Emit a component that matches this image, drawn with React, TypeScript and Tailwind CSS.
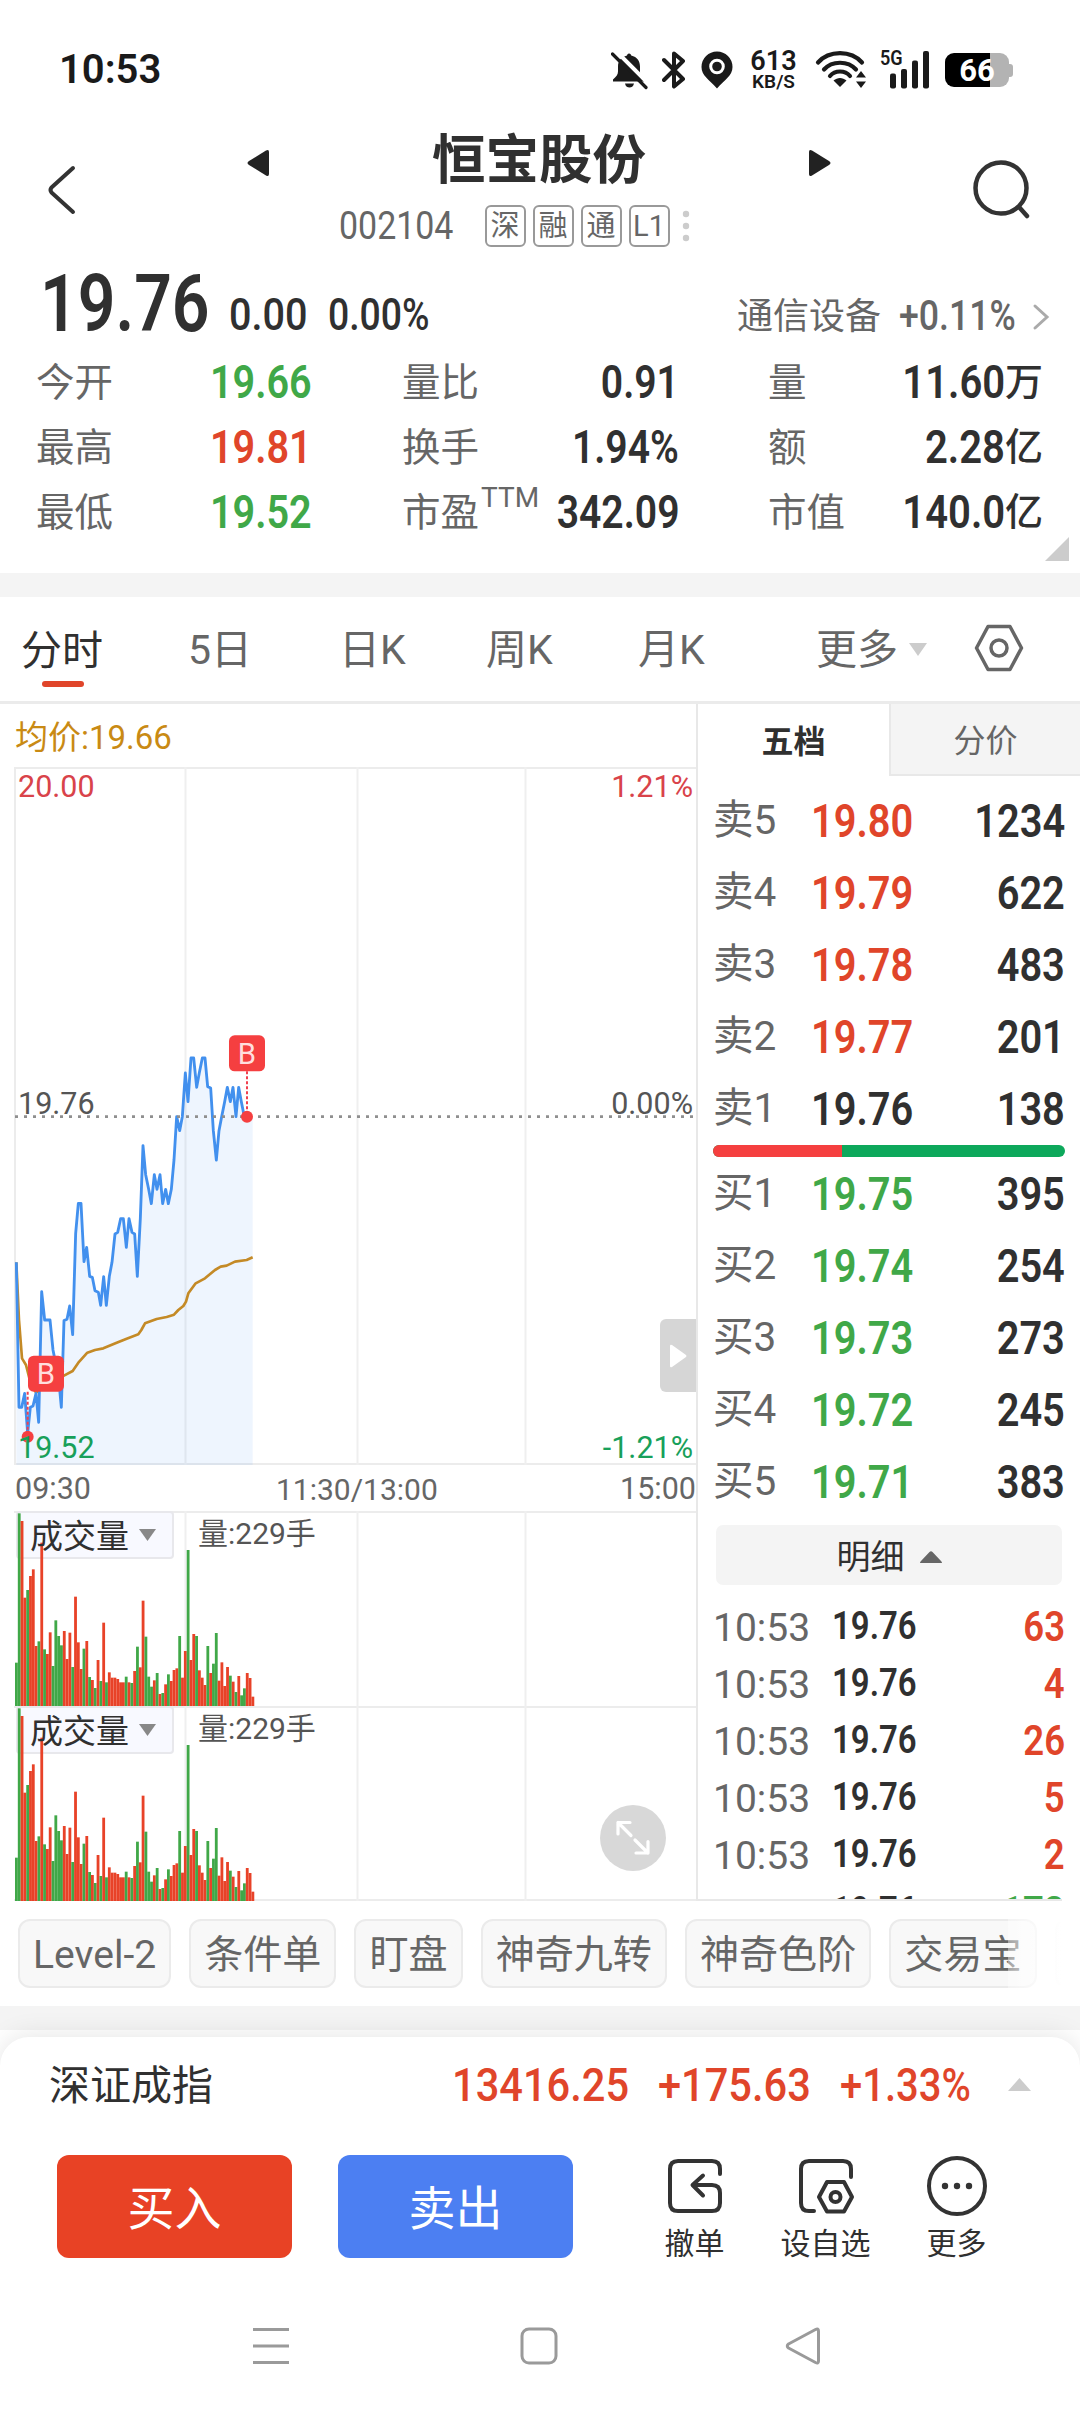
import React from "react";
import clsx from "clsx";

type Side = { label: string; price: string; size: string; tone: string };

const RED = "text-[#e0452a]";
const GREEN = "text-[#40a848]";
const DARK = "text-[#303030]";

const sells: Side[] = [
  { label: "卖5", price: "19.80", size: "1234", tone: RED },
  { label: "卖4", price: "19.79", size: "622", tone: RED },
  { label: "卖3", price: "19.78", size: "483", tone: RED },
  { label: "卖2", price: "19.77", size: "201", tone: RED },
  { label: "卖1", price: "19.76", size: "138", tone: DARK },
];

const buys: Side[] = [
  { label: "买1", price: "19.75", size: "395", tone: GREEN },
  { label: "买2", price: "19.74", size: "254", tone: GREEN },
  { label: "买3", price: "19.73", size: "273", tone: GREEN },
  { label: "买4", price: "19.72", size: "245", tone: GREEN },
  { label: "买5", price: "19.71", size: "383", tone: GREEN },
];

const ticks = [
  { size: "63", tone: RED },
  { size: "4", tone: RED },
  { size: "26", tone: RED },
  { size: "5", tone: RED },
  { size: "2", tone: RED },
  { size: "172", tone: GREEN },
];

const chips = ["Level-2", "条件单", "盯盘", "神奇九转", "神奇色阶", "交易宝"];

const priceLine =
  "49,787 57,1222 65,1222 74,1180 83,1300 91,1222 99,1218 108,1180 116,1267 125,875 134,960 150,960 159,1050 167,1090 176,1135 184,1222 192,962 201,958 209,918 218,1004 227,700 235,610 243,610 252,785 260,742 269,829 277,832 285,872 295,877 302,916 311,830 319,916 328,829 336,787 345,702 353,697 362,656 370,656 379,742 387,656 396,697 404,702 412,829 421,655 429,437 437,524 446,568 454,611 463,524 471,568 480,524 488,611 497,568 505,611 514,568 522,480 530,350 539,392 547,350 556,219 564,305 573,174 581,174 590,262 598,218 607,174 615,174 623,260 632,264 640,392 649,480 657,392 665,350 674,305 682,262 691,305 699,262 708,350 716,262 724,305 733,350 741,350";

const avgLine =
  "49,787 57,960 66,1075 78,1095 92,1150 108,1178 150,1150 192,1127 218,1113 235,1088 262,1058 285,1050 310,1045 350,1028 380,1016 415,1003 424,990 435,970 470,957 500,951 522,944 535,930 550,918 558,905 565,880 587,850 615,835 645,810 662,800 680,797 705,785 740,780 758,772";

/* Bar tops of the volume histogram, one per minute; the prefix gives the bar's direction. */
const volumes =
  "g668 g220 r243 r473 g450 r408 r388 r618 g604 r308 g628 r642 r577 g678 g541 g588 g616 r573 r657 r578 g681 r470 r607 r687 g626 r603 g711 r720 g744 r660 g723 r548 g727 r697 r713 r713 r717 r727 r727 g710 r727 g729 r693 g620 r682 r482 g590 g710 g740 r721 g699 r762 g759 r733 g703 r723 r690 r685 g588 r713 r633 g330 r660 r582 g588 r691 r713 r735 g618 r699 g671 g579 r722 r667 r738 r681 g707 r725 g756 r708 g766 g745 r699 r714 r770".split(
    " ",
  );

function Num({ children, className }: { children: React.ReactNode; className?: string }) {
  return <span className={clsx("inline-block whitespace-nowrap leading-none", className)}>{children}</span>;
}

function StatusBar() {
  return (
    <div className="flex h-[93px] items-end justify-between pl-[59px] pr-[67px] text-[#1a1a1a]">
      <span className="mb-[3px] text-[40px] font-semibold leading-[40px]">10:53</span>
      <div className="flex h-[42px] items-start">
        <svg width="38" height="40" viewBox="0 0 38 40" className="mr-[13px]">
          <path d="M18 2.500c1.500 0 2 1 2.200 2 6 1.500 8.800 5.500 8.800 11v6c0 2.500 1.500 4.500 4 7v2H2v-2c3-2.500 5-5 5-8v-5c0-6 3.500-9.500 9-11 .2-1 .8-2 2-2z" fill="currentColor" />
          <path d="M14 32.500h9c-.8 3-2.500 4-4.500 4s-3.800-1-4.500-4z" fill="currentColor" />
          <path d="M3 -2l36 36" stroke="#fff" strokeWidth="4" />
          <path d="M1.500 3l33.500 33.500" stroke="currentColor" strokeWidth="3.200" strokeLinecap="round" />
        </svg>
        <svg width="24" height="38" viewBox="0 0 24 38" className="mr-[15px]">
          <path d="M2 9l19 19-9 7.500V2.500L21 10 2 29" fill="none" stroke="currentColor" strokeWidth="4" strokeLinejoin="round" strokeLinecap="round" />
        </svg>
        <svg width="32" height="38" viewBox="0 0 32 38" className="mr-[17px]">
          <path d="M16 .5a15.500 15.500 0 0 0-15.500 15.500C.5 25 8 28 16 37.500 24 28 31.500 25 31.500 16A15.500 15.500 0 0 0 16 .5z" fill="currentColor" />
          <circle cx="16" cy="15.500" r="6.300" fill="none" stroke="#fff" strokeWidth="3" />
        </svg>
        <div className="mr-[18px] flex w-[47px] flex-col items-center font-semibold">
          <span className="text-[27px] leading-[21px]">613</span>
          <span className="whitespace-nowrap text-[19px] leading-[19px]">KB/S</span>
        </div>
        <svg width="52" height="38" viewBox="0 0 52 38" className="mr-[13px]">
          <g fill="none" stroke="currentColor" strokeWidth="4.200" strokeLinecap="round">
            <path d="M3 11.500C14-1 36-1 47 11.500" />
            <path d="M9 18.500c8-9 24-9 32 0" />
            <path d="M15 25c5-6 15-6 20 0" />
          </g>
          <path d="M18.500 29.500c4-3.500 9-3.500 13 0L25 36z" fill="currentColor" />
          <path d="M41 26.500h10L46 20zM41 30.500h10L46 37z" fill="currentColor" />
        </svg>
        <div className="relative mr-[16px] h-[38px] w-[49px]">
          <span className="absolute left-0 top-[-3px] origin-left scale-x-[.86] text-[21px] font-semibold leading-[21px]">5G</span>
          <svg width="39" height="38" viewBox="0 0 39 38" className="absolute right-0 top-0" fill="currentColor">
            <rect x="0" y="22.500" width="6" height="15" rx="2" />
            <rect x="11" y="18" width="6" height="19.500" rx="2" />
            <rect x="22" y="9.500" width="6" height="28" rx="2" />
            <rect x="33" y="0" width="6" height="37.500" rx="2" />
          </svg>
        </div>
        <div className="relative mt-[2px] flex h-[34px] w-[68px] items-center">
          <div className="flex h-full w-[64px] items-center justify-center overflow-hidden rounded-[9px] bg-[linear-gradient(90deg,#000_70%,#b3b3b3_70%)] text-[31px] font-bold leading-none text-white">
            66
          </div>
          <div className="h-[13px] w-[4px] rounded-r-[3px] bg-[#b3b3b3]" />
        </div>
      </div>
    </div>
  );
}

function Header() {
  return (
    <div className="flex h-[167px] justify-between pl-[46px] pr-[46px]">
      <svg width="30" height="50" viewBox="0 0 30 50" className="mt-[72px]" fill="none" stroke="#333" strokeWidth="4" strokeLinecap="round" strokeLinejoin="round">
        <path d="M27 3L5.500 22.500Q3.500 25 5.500 27.500L27 47" />
      </svg>
      <div className="ml-[30px] flex w-[586px] flex-col items-center">
        <div className="mt-[40px] flex h-[56px] w-full items-center justify-between">
          <svg width="24" height="28" viewBox="0 0 24 28" className="mt-[3px]">
            <path d="M23 3v22q0 3-3 1.500L3 16q-3-2 0-4L20 1.500Q23 0 23 3z" fill="#222" />
          </svg>
          <span className="text-[53.500px] font-bold leading-none text-[#303030]">恒宝股份</span>
          <svg width="24" height="28" viewBox="0 0 24 28" className="mt-[3px]">
            <path d="M1 3v22q0 3 3 1.500L21 16q3-2 0-4L4 1.500Q1 0 1 3z" fill="#222" />
          </svg>
        </div>
        <div className="mr-[50px] mt-[15px] flex h-[44px] items-center text-[#666]">
          <span className="w-[146px] text-[39px] leading-none">
            <span className="inline-block origin-left scale-x-[.87]">002104</span>
          </span>
          <div className="flex gap-[7px]">
            {["深", "融", "通", "L1"].map((t) => (
              <span key={t} className="flex h-[42px] w-[41px] items-center justify-center rounded-[6px] border-2 border-[#999] text-[29px] leading-none">
                {t}
              </span>
            ))}
          </div>
          <svg width="8" height="32" viewBox="0 0 8 32" className="ml-[12px]" fill="#ccc">
            <circle cx="4" cy="4" r="3.200" />
            <circle cx="4" cy="16" r="3.200" />
            <circle cx="4" cy="28" r="3.200" />
          </svg>
        </div>
      </div>
      <svg width="62" height="62" viewBox="0 0 62 62" className="mt-[66px]" fill="none" stroke="#333" strokeWidth="4.500" strokeLinecap="round">
        <circle cx="29" cy="29" r="25.500" />
        <path d="M47 48l8 9" />
      </svg>
    </div>
  );
}

function Label({ children }: { children: React.ReactNode }) {
  return <span className="relative top-[2px] inline-block whitespace-nowrap text-[38.500px] leading-none text-[#666]">{children}</span>;
}

function Quote() {
  const rows = [
    ["今开", "19.66", GREEN, "量比", "0.91", "量", "11.60万"],
    ["最高", "19.81", RED, "换手", "1.94%", "额", "2.28亿"],
    ["最低", "19.52", GREEN, "市盈", "342.09", "市值", "140.0亿"],
  ];
  return (
    <div className="relative h-[313px] font-semibold">
      <div className="flex h-[89px] items-end pl-[40px] pr-[30px] text-[#303030]">
        <span className="mb-[5px] w-[189px]">
          <Num className="origin-left scale-x-[.825] text-[80px]">19.76</Num>
        </span>
        <span className="mb-[12px] w-[99px]">
          <Num className="origin-left scale-x-[.88] text-[45px] font-medium">0.00</Num>
        </span>
        <span className="mb-[12px]">
          <Num className="origin-left scale-x-[.83] text-[45px] font-medium">0.00%</Num>
        </span>
        <div className="ml-auto flex items-center font-normal text-[#666]">
          <span className="mb-[10px] text-[36px] leading-none">通信设备</span>
          <span className="mb-[12px] ml-[18px] w-[133px]">
            <Num className="origin-left scale-x-[.85] text-[42px] font-medium">+0.11%</Num>
          </span>
          <svg width="18" height="28" viewBox="0 0 18 28" className="mb-[11px]" fill="none" stroke="#aaa" strokeWidth="3" strokeLinecap="round">
            <path d="M3 3l12 11L3 25" />
          </svg>
        </div>
      </div>
      {rows.map(([a, av, tone, b, bv, c, cv]) => (
        <div key={a} className="flex h-[65px] items-center pl-[36px] pr-[37px]">
          <span className="w-[174px] font-normal">
            <Label>{a}</Label>
          </span>
          <span className={clsx("w-[192px]", tone)}>
            <Num className="origin-left scale-x-[.86] text-[46px]">{av}</Num>
          </span>
          <span className="relative w-[76px] font-normal">
            <Label>{b}</Label>
            {b === "市盈" && <span className="absolute left-[79px] top-[-8px] text-[28px] leading-none text-[#666]">TTM</span>}
          </span>
          <span className="flex w-[201px] justify-end text-[#303030]">
            <Num className="origin-right scale-x-[.85] text-[46px]">{bv}</Num>
          </span>
          <span className="ml-[89px] w-[76px] font-normal">
            <Label>{c}</Label>
          </span>
          <span className="flex flex-1 items-center justify-end text-[#303030]">
            <Num className="origin-right scale-x-[.87] text-[46px]">{cv.slice(0, -1)}</Num>
            <span className="text-[38px] font-medium leading-none">{cv.slice(-1)}</span>
          </span>
        </div>
      ))}
      <svg width="24" height="24" viewBox="0 0 24 24" className="absolute bottom-[12px] right-[11px]">
        <path d="M24 0v24H0z" fill="#ccc" />
      </svg>
    </div>
  );
}

function PeriodTabs() {
  return (
    <div className="flex h-[107px] items-center border-b-[3px] border-[#ebebeb] pt-[3px] text-[41px] leading-none text-[#666]">
      <div className="flex w-[167px] flex-col pl-[21px] pt-[17px] text-[#303030]">
        <span>分时</span>
        <span className="ml-[21px] mt-[9px] h-[6px] w-[42px] rounded-full bg-[#e0452a]" />
      </div>
      <span className="w-[172px] pl-[21px]">5日</span>
      <span className="w-[147px]">日K</span>
      <span className="w-[152px]">周K</span>
      <span className="w-[178px]">月K</span>
      <span>更多</span>
      <svg width="18" height="13" viewBox="0 0 18 13" className="-mt-[3px] ml-[11px]">
        <path d="M0 0h18L9 13z" fill="#ccc" />
      </svg>
      <svg width="50" height="48" viewBox="0 0 50 48" className="-mt-[5px] ml-[47px]" fill="none" stroke="#666" strokeWidth="3.500" strokeLinejoin="round">
        <path d="M14 2.500h22L47.500 24 36 45.500H14L2.500 24z" />
        <circle cx="25" cy="24" r="8" />
      </svg>
    </div>
  );
}

function Marker({ x, y, dotX, dotY }: { x: number; y: number; dotX: number; dotY: number }) {
  return (
    <g>
      <path d={`M${dotX} ${y + 108}V${dotY}`} stroke="#f04050" strokeWidth="6" strokeDasharray="9 6" />
      <circle cx={dotX} cy={dotY} r="18" fill="#f53f40" />
      <rect x={x} y={y} width="108" height="108" rx="17" fill="#f53f40" />
      <text x={x + 54} y={y + 86} textAnchor="middle" fontSize="88" fill="#ffdede">
        B
      </text>
    </g>
  );
}

function PriceChart() {
  return (
    <div className="relative ml-[14px] h-[698px] border-b-2 border-l-2 border-t-2 border-[#ececec] text-[30.500px] leading-none">
      <svg width="682" height="698" viewBox="0 0 682 698" className="absolute -left-[2px] -top-[2px]">
        <path d="M171.500 0v698M343.500 0v698M511.500 0v698" stroke="#efefef" strokeWidth="2" />
        <g transform="translate(-14 233) scale(0.33333)">
          <polygon points={`${priceLine} 758,350 758,1395 49,1395`} fill="#4090f0" fillOpacity="0.09" />
          <polyline points={avgLine} fill="none" stroke="#c48a26" strokeWidth="8" strokeLinejoin="round" />
          <polyline points={priceLine} fill="none" stroke="#4290ee" strokeWidth="8.500" strokeLinejoin="round" />
          <path d="M45 350H2088" stroke="#8f8f8f" strokeWidth="8" strokeDasharray="9 18" />
          <Marker x={687} y={106} dotX={741} dotY={350} />
          <Marker x={84} y={1067} dotX={83} dotY={1310} />
        </g>
      </svg>
      <span className="absolute left-[2px] top-[3px] text-[#d9434a]">20.00</span>
      <span className="absolute right-[3px] top-[3px] text-[#d9434a]">1.21%</span>
      <span className="absolute left-[2px] top-[320px] text-[#555]">19.76</span>
      <span className="absolute right-[3px] top-[320px] text-[#555]">0.00%</span>
      <span className="absolute bottom-0 left-[2px] text-[#18a05a]">19.52</span>
      <span className="absolute bottom-0 right-[3px] text-[#18a05a]">-1.21%</span>
      <div className="absolute right-0 top-[550px] flex h-[73px] w-[36px] items-center justify-center rounded-l-[6px] bg-[#d6d6d6]">
        <svg width="18" height="24" viewBox="0 0 18 24">
          <path d="M1 2v20q0 2 2 1L17 13q1-1 0-2L3 1Q1 0 1 2z" fill="#fff" />
        </svg>
      </div>
    </div>
  );
}

function VolumeChart({ last }: { last?: boolean }) {
  return (
    <div className={clsx("relative ml-[14px] h-[195px] border-t-2 border-[#ececec]", last && "border-b-2")}>
      <div className="absolute -top-[2px] left-[2px] flex h-[48px] w-[158px] rounded-[4px] border-2 border-[#e8e8ec] bg-[#f8f9ff]" />
      <svg width="682" height="195" viewBox="0 0 682 195" className="absolute left-0 -top-[2px]">
        <path d="M171.500 0v195M343.500 0v195M511.500 0v195" stroke="#efefef" strokeWidth="2" />
        {volumes.map((v, i) => {
          const top = Number(v.slice(1)) / 3 - 71;
          return <rect key={i} x={1 + i * 2.815} y={top} width="2.815" height={195 - top} fill={v[0] === "g" ? "#40a848" : "#e84228"} />;
        })}
      </svg>
      <div className="relative flex h-[44px] items-center pl-[16px] pt-[2px] text-[33px] leading-none text-[#303030]">
        成交量
        <svg width="17" height="12" viewBox="0 0 17 12" className="-mt-[2px] ml-[10px]">
          <path d="M0 0h17L8.500 12z" fill="#888" />
        </svg>
        <span className="-mt-[5px] ml-[42px] text-[30px] text-[#555]">量:229手</span>
      </div>
    </div>
  );
}

function BookRow({ row }: { row: Side }) {
  return (
    <div className="flex h-[72px] items-center pl-[15px] pr-[15px]">
      <span className="mt-[3px] w-[98px] text-[40.500px] leading-none text-[#666]">{row.label}</span>
      <span className={clsx("mt-[3px] font-semibold", row.tone)}>
        <Num className="origin-left scale-x-[.865] text-[46px]">{row.price}</Num>
      </span>
      <span className="mt-[3px] flex flex-1 justify-end font-semibold text-[#303030]">
        <Num className="origin-right scale-x-[.865] text-[46px]">{row.size}</Num>
      </span>
    </div>
  );
}

function OrderBook() {
  return (
    <div className="flex h-[1197px] w-[384px] flex-col border-l-2 border-[#e8e8e8]">
      <div className="flex h-[72px] text-[32px] leading-none">
        <div className="flex w-[191px] items-center justify-center pt-[3px] font-bold text-[#303030]">五档</div>
        <div className="flex flex-1 items-center justify-center border-2 border-r-0 border-t-0 border-[#e8e8e8] bg-[#f4f4f4] pt-[3px] text-[#666]">分价</div>
      </div>
      <div className="h-[7px]" />
      {sells.map((r) => (
        <BookRow key={r.label} row={r} />
      ))}
      <div className="ml-[15px] mr-[15px] mt-[2px] flex h-[12px] shrink-0 overflow-hidden rounded-full bg-[#0da85b]">
        <div className="w-[129px] bg-[#f53f3f]" />
      </div>
      <div className="-mt-px">
        {buys.map((r) => (
          <BookRow key={r.label} row={r} />
        ))}
      </div>
      <div className="ml-[18px] mt-[9px] flex h-[60px] w-[346px] shrink-0 items-center justify-center rounded-[7px] bg-[#f4f4f4] pt-[4px] text-[34px] leading-none text-[#303030]">
        明细
        <svg width="22" height="12" viewBox="0 0 22 12" className="ml-[15px]">
          <path d="M1 12Q-1 12 1 10L9.500 1Q11-.5 12.500 1L21 10Q23 12 21 12z" fill="#666" />
        </svg>
      </div>
      <div className="min-h-0 flex-1 overflow-hidden pt-[13px]">
        {ticks.map((t, i) => (
          <div key={i} className="flex h-[57px] items-center pl-[15px] pr-[15px]">
            <span className="mt-[4px] w-[119px] text-[39px] leading-none text-[#666]">{i < 5 ? "10:53" : ""}</span>
            <span className="font-semibold text-[#303030]">
              <Num className="origin-left scale-x-[.845] text-[39px]">19.76</Num>
            </span>
            <span className={clsx("flex flex-1 justify-end font-semibold", t.tone)}>
              <Num className="origin-right scale-x-[.85] text-[43px]">{t.size}</Num>
            </span>
          </div>
        ))}
      </div>
      <div className="mr-[18px] h-[2px] shrink-0 bg-[#e8e8e8]" />
    </div>
  );
}

function MarketPanel() {
  return (
    <div className="flex h-[1198px]">
      <div className="relative w-[696px]">
        <div className="flex h-[63px] items-center pl-[15px] pt-[3px] text-[33px] leading-none text-[#c98a14]">均价:19.66</div>
        <PriceChart />
        <div className="relative ml-[14px] flex h-[46px] items-center justify-between pt-[3px] text-[30.500px] leading-none text-[#666]">
          <span className="pl-[1px]">09:30</span>
          <span className="absolute left-[262px] text-[30px]">11:30/13:00</span>
          <span>15:00</span>
        </div>
        <VolumeChart />
        <VolumeChart last />
        <div className="absolute bottom-[31px] right-[30px] flex h-[66px] w-[66px] items-center justify-center rounded-full bg-[#d8d8d8]">
          <svg width="36" height="36" viewBox="0 0 36 36" fill="none" stroke="#fff" strokeWidth="3.200" strokeLinecap="round" strokeLinejoin="round">
            <path d="M15 2.500H3V14M3 2.500l13 13M21 33h12V21.500M33 33L20 20" />
          </svg>
        </div>
      </div>
      <OrderBook />
    </div>
  );
}

function Chips() {
  return (
    <div className="relative flex h-[104px] gap-[18px] overflow-hidden pl-[18px] pt-[17px]">
      {chips.map((c) => (
        <span key={c} className="flex h-[69px] shrink-0 items-center rounded-[12px] border-2 border-[#ebebeb] bg-[#f8f8f8] px-[13px] pt-[4px] text-[39.100px] leading-none text-[#666]">
          {c}
        </span>
      ))}
      <span className="h-[69px] w-[60px] shrink-0 rounded-[12px] border-2 border-[#ebebeb] bg-[#f8f8f8]" />
      <div className="absolute right-0 top-0 h-full w-[72px] bg-[linear-gradient(90deg,rgba(255,255,255,.4),#fff_75%)]" />
    </div>
  );
}

function IndexRow() {
  return (
    <div className="flex h-[99px] items-center pl-[49px] pr-[49px]">
      <span className="w-[403px] text-[41px] leading-none text-[#303030]">深证成指</span>
      <div className={clsx("-mt-[4px] flex flex-1 font-medium", RED)}>
        <span className="w-[206px]">
          <Num className="origin-left scale-x-[.885] text-[47px]">13416.25</Num>
        </span>
        <span className="w-[182px]">
          <Num className="origin-left scale-x-[.885] text-[47px]">+175.63</Num>
        </span>
        <Num className="origin-left scale-x-[.85] text-[47px]">+1.33%</Num>
      </div>
      <svg width="23" height="13" viewBox="0 0 23 13" className="-mt-[4px]">
        <path d="M11.500 0L23 13H0z" fill="#ccc" />
      </svg>
    </div>
  );
}

function Action({ label, children }: { label: string; children: React.ReactNode }) {
  return (
    <div className="flex w-[131px] flex-col items-center">
      <svg width="62" height="62" viewBox="0 0 62 62" fill="none" stroke="#333" strokeWidth="4" strokeLinecap="round" strokeLinejoin="round">
        {children}
      </svg>
      <span className="mt-[12px] text-[30px] leading-none text-[#303030]">{label}</span>
    </div>
  );
}

function Actions() {
  return (
    <div className="flex h-[124px] pl-[57px] pt-[19px] text-[47px] leading-none text-white">
      <div className="flex h-[103px] w-[235px] items-center justify-center rounded-[12px] bg-[#e84225] pt-[4px]">买入</div>
      <div className="ml-[46px] flex h-[103px] w-[235px] items-center justify-center rounded-[12px] bg-[#4c7ff2] pt-[4px]">卖出</div>
      <div className="ml-[56px] flex">
        <Action label="撤单">
          <path d="M56 19V14q0-8-8-8H14q-8 0-8 8v34q0 8 8 8h34q8 0 8-8V38q0-8-8-8H29M39 20.500L28.500 30 39 40.500" />
        </Action>
        <Action label="设自选">
          <path d="M56 22V14q0-8-8-8H14q-8 0-8 8v34q0 8 8 8h5" />
          <path d="M32 27h17l8 15-8 14.500H32L24 42z" />
          <circle cx="40.500" cy="42" r="5" />
        </Action>
        <Action label="更多">
          <circle cx="31" cy="31" r="28" />
          <g fill="#333" stroke="none">
            <circle cx="19" cy="31" r="3.200" />
            <circle cx="31" cy="31" r="3.200" />
            <circle cx="43" cy="31" r="3.200" />
          </g>
        </Action>
      </div>
    </div>
  );
}

function SystemNav() {
  return (
    <div className="flex h-[152px] items-center justify-between pl-[252px] pr-[259px] pt-[19px]">
      <svg width="38" height="38" viewBox="0 0 38 38" stroke="#9a9a9a" strokeWidth="3">
        <path d="M1 2.500h36M1 19h36M1 35.500h36" />
      </svg>
      <svg width="38" height="38" viewBox="0 0 38 38" fill="none" stroke="#9a9a9a" strokeWidth="3" className="ml-[2px]">
        <rect x="2" y="2" width="34" height="34" rx="7" />
      </svg>
      <svg width="36" height="38" viewBox="0 0 36 38" fill="none" stroke="#9a9a9a" strokeWidth="3" strokeLinejoin="round">
        <path d="M33.500 4v30q0 3-3 1.500L3.500 21q-2.500-2 0-4L30.500 2.500Q33.500 1 33.500 4z" />
      </svg>
    </div>
  );
}

export default function App() {
  return (
    <div className="h-[2412px] w-[1080px] overflow-hidden bg-white font-[Roboto,'Noto_Sans_CJK_SC',sans-serif]">
      <StatusBar />
      <Header />
      <Quote />
      <div className="h-[24px] bg-[#f4f4f4]" />
      <PeriodTabs />
      <MarketPanel />
      <Chips />
      <div className="h-[24px] bg-[#f4f4f4]" />
      <div className="relative mt-[7px] h-[375px] rounded-t-[29px] bg-white shadow-[0_-2px_26px_rgba(0,0,0,0.10)]">
        <IndexRow />
        <Actions />
        <SystemNav />
      </div>
    </div>
  );
}
